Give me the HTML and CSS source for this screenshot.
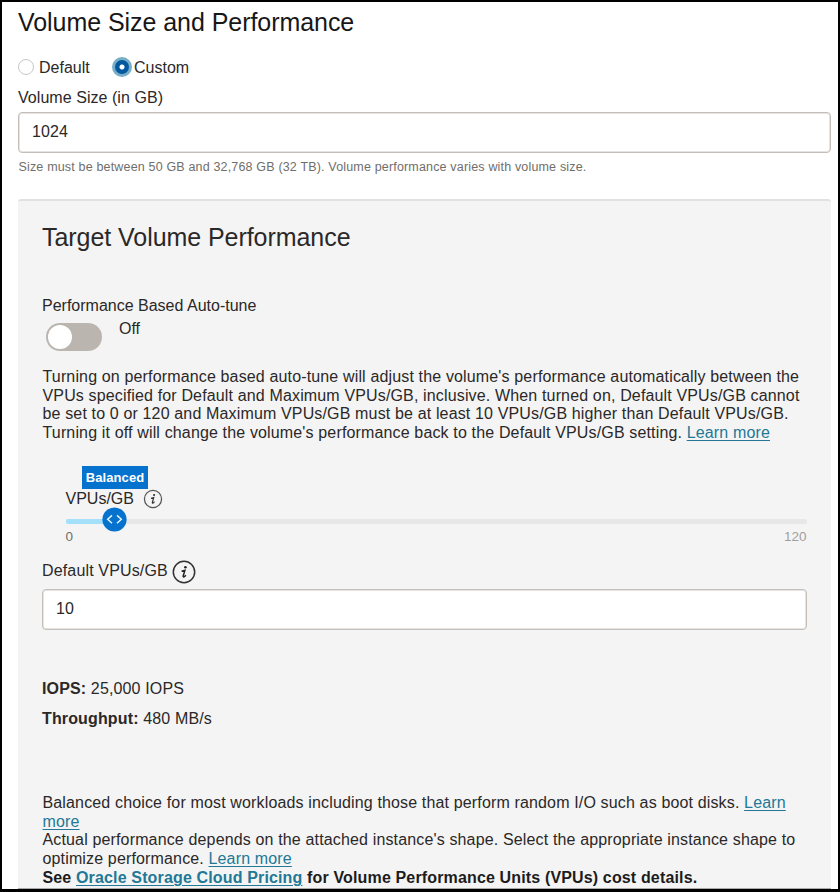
FILE: index.html
```
<!DOCTYPE html>
<html lang="en">
<head>
<meta charset="utf-8">
<title>Volume Size and Performance</title>
<link rel="stylesheet" href="styles.css">
</head>
<body>
<main class="page">
  <h1 class="title"><span>Volume Size and Performance</span></h1>
  <div class="radios">
    <label class="radio"><span class="dot"></span><span class="radio-text">Default</span></label>
    <label class="radio radio-custom"><span class="dot dot-on"></span><span class="radio-text">Custom</span></label>
  </div>
  <div class="label size-label">Volume Size (in GB)</div>
  <div class="input">1024</div>
  <p class="hint">Size must be between 50 GB and 32,768 GB (32 TB). Volume performance varies with volume size.</p>
  <section class="panel">
    <h2 class="title">Target Volume Performance</h2>
    <div class="label tune-label">Performance Based Auto-tune</div>
    <div class="toggle-row"><span class="toggle"></span><span>Off</span></div>
    <p class="copy tune-copy">
      <span class="line">Turning on performance based auto-tune will adjust the volume's performance automatically between the</span>
      <span class="line">VPUs specified for Default and Maximum VPUs/GB, inclusive. When turned on, Default VPUs/GB cannot</span>
      <span class="line">be set to 0 or 120 and Maximum VPUs/GB must be at least 10 VPUs/GB higher than Default VPUs/GB.</span>
      <span class="line">Turning it off will change the volume's performance back to the Default VPUs/GB setting. <a>Learn more</a></span>
    </p>
    <div class="slider">
      <div class="tag">Balanced</div>
      <div class="slider-label"><span>VPUs/GB</span>
        <svg width="20" height="20" viewBox="0 0 24 24"><circle cx="12" cy="12" r="10.3" fill="none" stroke="#555" stroke-width="1.5"/><circle cx="13.3" cy="7.2" r="1.3" fill="#333"/><path d="M9.6 11.2 12.9 10.4 11.2 16Q11 17.6 12.4 16.7L13.9 15.2" fill="none" stroke="#333" stroke-width="1.4"/></svg>
      </div>
      <div class="track"><div class="fill"></div>
        <svg class="thumb" width="25" height="25" viewBox="0 0 25 25"><circle cx="12.5" cy="12.5" r="12.1" fill="#0572ce"/><path d="M10 8.4 5.7 12.3 10 16.2M15 8.4 19.3 12.3 15 16.2" fill="none" stroke="#e4f4ff" stroke-width="1.5"/></svg>
      </div>
      <div class="range"><span>0</span><span class="max">120</span></div>
    </div>
    <div class="vpu-label"><span>Default VPUs/GB</span>
      <svg width="24" height="24" viewBox="0 0 24 24"><circle cx="12" cy="12" r="10.7" fill="none" stroke="#333" stroke-width="1.5"/><circle cx="13.4" cy="7.2" r="1.3" fill="#222"/><path d="M9.6 11.2 12.9 10.4 11.2 16Q11 17.6 12.4 16.7L13.9 15.2" fill="none" stroke="#222" stroke-width="1.5"/></svg>
    </div>
    <div class="input input-vpu">10</div>
    <div class="stat stat-iops"><b>IOPS:</b> 25,000 IOPS</div>
    <div class="stat"><b>Throughput:</b> 480 MB/s</div>
    <p class="copy foot-copy">
      <span class="line">Balanced choice for most workloads including those that perform random I/O such as boot disks. <a>Learn</a></span>
      <span class="line"><a>more</a></span>
      <span class="line">Actual performance depends on the attached instance's shape. Select the appropriate instance shape to</span>
      <span class="line">optimize performance. <a>Learn more</a></span>
      <span class="line pricing">See <a>Oracle Storage Cloud Pricing</a> for Volume Performance Units (VPUs) cost details.</span>
    </p>
  </section>
</main>
</body>
</html>
```
FILE: styles.css
```
* { box-sizing: border-box; margin: 0; padding: 0; }
body { width: 840px; height: 892px; overflow: hidden; background: #fff; font: 16px/20px "Liberation Sans", Arial, sans-serif; color: #2b2828; }
.page { height: 892px; border: solid #000; border-width: 2px 2px 3px 2px; padding: 5px 7.5px 0 16px; white-space: nowrap; }
.title { font-size: 25px; line-height: 30px; font-weight: 400; letter-spacing: -0.055px; }
h1.title { color: #171717; }
.radios { display: flex; margin-top: 20px; height: 20px; }
.radio { display: flex; align-items: center; gap: 5px; width: 94px; line-height: 20px; }
.radio-custom { gap: 2px; }
.radio-text { padding-top: 2px; }
.dot { width: 16px; height: 16px; border: 1px solid #c4c8cc; border-radius: 50%; background: #fff; flex: none; }
.dot-on { width: 20px; height: 20px; border: 3px solid #79aec6; background: radial-gradient(circle, #fff 0 2px, #0358a0 3px); }
.label { line-height: 22px; height: 20px; }
.size-label { margin-top: 10px; letter-spacing: 0.05px; }
.input { height: 41px; margin-top: 5px; padding: 0 13px; border: 1px solid #c4bfba; box-shadow: inset 0 0 0 1px #e6e3e0; border-radius: 4px; background: #fff; line-height: 38px; letter-spacing: 0.1px; }
.hint { margin-top: 6px; height: 16px; font-size: 12.5px; line-height: 17px; letter-spacing: 0.17px; color: #706e6b; padding-left: 0.5px; }
.panel { margin-top: 24px; height: 690px; padding: 21px 24px 0; background: #f4f4f4; border-top: 2px solid #dfe2e5; border-bottom: 1px solid #aaa; border-radius: 3px 3px 0 0; }
.tune-label { margin-top: 43px; }
.toggle-row { display: flex; margin-top: 4px; height: 32px; line-height: 20px; }
.toggle { width: 56px; height: 28px; margin: 4px 17px 0 4px; border-radius: 14px; padding: 2px; background: #bbb5b0; }
.toggle::before { content: ""; display: block; width: 24px; height: 24px; border-radius: 50%; background: #fff; }
.copy { line-height: 18.7px; padding-left: 0.5px; letter-spacing: 0.149px; }
.line { display: block; }
a { color: #227896; text-decoration: underline; text-decoration-thickness: 1px; text-underline-offset: 2px; }
.tune-copy { margin-top: 17px; height: 75px; }
.slider { margin-top: 23px; padding-left: 23.5px; }
.tag { width: 66px; height: 23px; margin-left: 16.5px; background: #0572ce; color: #fff; font-size: 13px; font-weight: 700; line-height: 24px; text-align: center; letter-spacing: 0.1px; }
.slider-label { display: flex; gap: 9.5px; height: 20px; }
.track { position: relative; height: 5px; margin-top: 10px; background: #e7e7e7; border-radius: 2px; }
.fill { width: 48px; height: 5px; background: #a5e0fb; border-radius: 2px 0 0 2px; }
.thumb { position: absolute; left: 36px; top: -12px; }
.range { display: flex; justify-content: space-between; margin-top: 4px; height: 16px; font-size: 13.5px; line-height: 18px; color: #706e6b; }
.max { color: #a19f9d; }
.vpu-label { display: flex; gap: 4px; height: 24px; margin-top: 16px; line-height: 21px; letter-spacing: 0.15px; }
.input-vpu { margin-top: 5px; }
.stat { margin-top: 10px; height: 20px; line-height: 22px; letter-spacing: 0.14px; }
.stat-iops { margin-top: 48px; }
.foot-copy { margin-top: 66px; }
.pricing { color: #1c1c1c; font-weight: 700; line-height: 17px; }
```
